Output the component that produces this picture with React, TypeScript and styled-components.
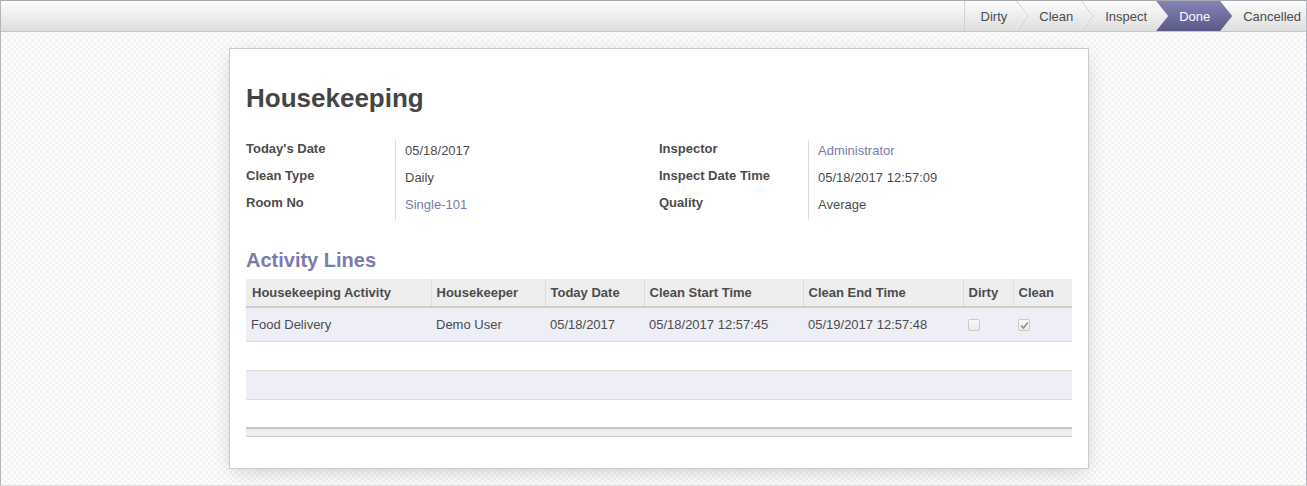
import React from "react";
import styled, { createGlobalStyle } from "styled-components";

const GlobalStyle = createGlobalStyle`
  html, body { margin: 0; padding: 0; }
  body {
    font-family: "Liberation Sans", Arial, Helvetica, sans-serif;
    font-size: 13px;
    color: #4c4c4c;
  }
  * { box-sizing: border-box; }
`;

const Frame = styled.div`
  width: 1307px;
  height: 486px;
  border-left: 1px solid #b4b4bc;
  border-right: 1px solid #b4b4bc;
  border-bottom: 1px solid #dcdcdc;
  background-color: #fbfbfb;
  background-image: repeating-conic-gradient(#f3f3f3 0 25%, #fdfdfd 0 50%);
  background-size: 6px 6px;
  display: flex;
  flex-direction: column;
  overflow: hidden;
`;

const Header = styled.div`
  height: 32px;
  flex: none;
  border-top: 1px solid #a9a9b0;
  border-bottom: 1px solid #c6c6c9;
  background: linear-gradient(to bottom, #fcfcfc, #dedede);
  display: flex;
  justify-content: flex-end;
  align-items: stretch;
`;

const StatusItem = styled.div<{ $first?: boolean; $pl: number; $pr: number }>`
  display: flex;
  align-items: center;
  padding: 0 ${(p) => p.$pr}px 0 ${(p) => p.$pl}px;
  border-left: ${(p) => (p.$first ? "1px solid #d2d2d2" : "none")};
  color: #4c4c4c;
  font-size: 13px;
  white-space: nowrap;
`;

const ActiveItem = styled.div`
  display: flex;
  align-items: center;
  width: 76px;
  padding-left: 23px;
  color: #ffffff;
  font-size: 13px;
  background: linear-gradient(to bottom, #8584b6, #5a5889);
  clip-path: polygon(0 0, 64px 0, 76px 50%, 64px 100%, 0 100%, 12px 50%);
`;

const ChevronSvg = styled.svg`
  width: 12px;
  height: 30px;
  flex: none;
  display: block;
`;

const Chevron = () => (
  <ChevronSvg viewBox="0 0 12 30">
    <polyline points="0.5,0 11.5,15 0.5,30" fill="none" stroke="#cacaca" strokeWidth="1" />
    <polyline points="-0.5,0 10.5,15 -0.5,30" fill="none" stroke="#ffffff" strokeOpacity="0.7" strokeWidth="1" />
  </ChevronSvg>
);

const Canvas = styled.div`
  flex: 1;
  display: flex;
  justify-content: center;
  padding: 16px 0 0 11px;
`;

const Sheet = styled.div`
  width: 860px;
  height: 421px;
  background: #ffffff;
  border: 1px solid #c9c9d4;
  box-shadow: 0 5px 20px -4px rgba(0, 0, 0, 0.2);
  padding: 0 16px 30px;
  display: flex;
  flex-direction: column;
`;

const Title = styled.h1`
  margin: 34px 0 0;
  font-size: 26px;
  line-height: 30px;
  font-weight: bold;
  color: #454545;
`;

const Groups = styled.div`
  margin-top: 27px;
  display: grid;
  grid-template-columns: 1fr 1fr;
`;

const Group = styled.div`
  display: grid;
  grid-template-columns: 150px 1fr;
  grid-template-rows: 27px 27px 26px;
`;

const Label = styled.div`
  border-right: 1px solid #dcdcdc;
  padding-top: 1px;
  font-weight: bold;
  line-height: 15px;
  color: #4c4c4c;
`;

const Value = styled.div<{ $link?: boolean }>`
  padding: 3px 0 0 9px;
  line-height: 15px;
  color: ${(p) => (p.$link ? "#7c7bad" : "#4c4c4c")};
`;

const SectionTitle = styled.h2`
  margin: 28px 0 7px;
  font-size: 20px;
  line-height: 24px;
  font-weight: bold;
  color: #7c7bad;
`;

const Table = styled.table`
  width: 826px;
  table-layout: fixed;
  border-collapse: collapse;
  font-size: 13px;
`;

const HeadCell = styled.th<{ $first?: boolean }>`
  background: #eeeeee;
  height: 28px;
  padding: 0 0 0 ${(p) => (p.$first ? 6 : 5)}px;
  text-align: left;
  font-weight: bold;
  color: #4c4c4c;
  line-height: 15px;
  border-left: ${(p) => (p.$first ? "none" : "1px solid #dddddd")};
  border-bottom: 2px solid #cccccc;
  white-space: nowrap;
`;

const Row = styled.tr<{ $striped?: boolean; $tall?: boolean }>`
  background: ${(p) => (p.$striped ? "#eeeef6" : "#ffffff")};
  height: ${(p) => (p.$tall ? 34 : 29)}px;
  border-bottom: 1px solid #dcdcdc;
`;

const Cell = styled.td`
  padding: 0 0 0 5px;
  color: #4c4c4c;
  line-height: 15px;
  white-space: nowrap;
  vertical-align: middle;
`;

const FootCell = styled.td`
  height: 8px;
  padding: 0;
  background: #eeeeee;
  border-top: 2px solid #c8c8c8;
  border-bottom: 1px solid #cccccc;
`;

const Box = styled.span`
  display: inline-flex;
  align-items: center;
  justify-content: center;
  width: 12px;
  height: 12px;
  border: 1px solid #cbcbcb;
  border-radius: 2px;
  background: linear-gradient(to bottom, #f8f8f8, #ebebeb);
  vertical-align: middle;
`;

const CheckSvg = styled.svg`
  width: 9px;
  height: 9px;
  display: block;
`;

const CheckBox = ({ checked }: { checked?: boolean }) => (
  <Box>
    {checked && (
      <CheckSvg viewBox="0 0 9 9">
        <path d="M1.2 4.6 L3.6 7 L7.8 1.6" fill="none" stroke="#8f8f8f" strokeWidth="1.6" />
      </CheckSvg>
    )}
  </Box>
);

const columns = [
  { label: "Housekeeping Activity", w: 185 },
  { label: "Housekeeper", w: 114 },
  { label: "Today Date", w: 99 },
  { label: "Clean Start Time", w: 159 },
  { label: "Clean End Time", w: 160 },
  { label: "Dirty", w: 50 },
  { label: "Clean", w: 59 },
];

export default function App() {
  return (
    <>
      <GlobalStyle />
      <Frame>
        <Header>
          <StatusItem $first $pl={16} $pr={9}>Dirty</StatusItem>
          <Chevron />
          <StatusItem $pl={11} $pr={8}>Clean</StatusItem>
          <Chevron />
          <StatusItem $pl={12} $pr={9}>Inspect</StatusItem>
          <ActiveItem>Done</ActiveItem>
          <StatusItem $pl={11} $pr={5}>Cancelled</StatusItem>
        </Header>
        <Canvas>
          <Sheet>
            <Title>Housekeeping</Title>
            <Groups>
              <Group>
                <Label>Today's Date</Label>
                <Value>05/18/2017</Value>
                <Label>Clean Type</Label>
                <Value>Daily</Value>
                <Label>Room No</Label>
                <Value $link>Single-101</Value>
              </Group>
              <Group>
                <Label>Inspector</Label>
                <Value $link>Administrator</Value>
                <Label>Inspect Date Time</Label>
                <Value>05/18/2017 12:57:09</Value>
                <Label>Quality</Label>
                <Value>Average</Value>
              </Group>
            </Groups>
            <SectionTitle>Activity Lines</SectionTitle>
            <Table>
              <colgroup>
                {columns.map((c) => (
                  <col key={c.label} style={{ width: c.w }} />
                ))}
              </colgroup>
              <thead>
                <tr>
                  {columns.map((c, i) => (
                    <HeadCell key={c.label} $first={i === 0}>
                      {c.label}
                    </HeadCell>
                  ))}
                </tr>
              </thead>
              <tbody>
                <Row $striped $tall>
                  <Cell>Food Delivery</Cell>
                  <Cell>Demo User</Cell>
                  <Cell>05/18/2017</Cell>
                  <Cell>05/18/2017 12:57:45</Cell>
                  <Cell>05/19/2017 12:57:48</Cell>
                  <Cell>
                    <CheckBox />
                  </Cell>
                  <Cell>
                    <CheckBox checked />
                  </Cell>
                </Row>
                <Row>
                  <Cell colSpan={7} />
                </Row>
                <Row $striped>
                  <Cell colSpan={7} />
                </Row>
                <Row>
                  <Cell colSpan={7} />
                </Row>
              </tbody>
              <tfoot>
                <tr>
                  <FootCell colSpan={7} />
                </tr>
              </tfoot>
            </Table>
          </Sheet>
        </Canvas>
      </Frame>
    </>
  );
}
